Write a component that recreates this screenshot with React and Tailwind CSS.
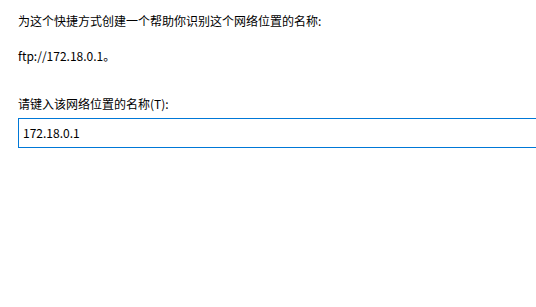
import React from "react";

const font = { fontFamily: '"Microsoft YaHei", "Noto Sans CJK SC", sans-serif' };

const App = () => {
  return (
    <div className="w-[536px] h-[307px] bg-white text-black overflow-hidden text-[12px]" style={font}>
      <div className="pl-[18px] pt-[13px]">
        <p className="leading-[16px]">为这个快捷方式创建一个帮助你识别这个网络位置的名称:</p>
        <p className="leading-[16px] mt-[19px]">ftp://172.18.0.1。</p>
        <p className="leading-[16px] mt-[32px]">请键入该网络位置的名称(T):</p>
        <div className="mt-[6px] w-[540px] h-[30px] border border-[#0078d7] flex items-center pl-[4px]">
          <span className="leading-[16px]">172.18.0.1</span>
        </div>
      </div>
    </div>
  );
};

export default App;
